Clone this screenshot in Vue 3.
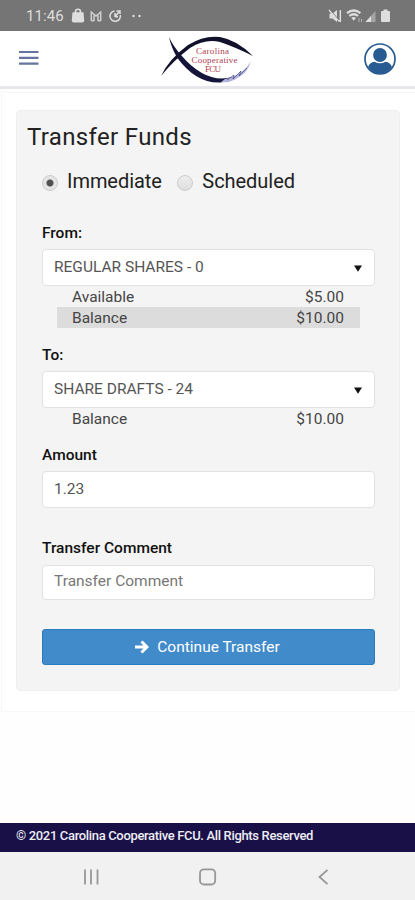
<script setup>
import { ref } from 'vue'

const timing = ref('Immediate')
const timings = ['Immediate', 'Scheduled']
const amount = ref('1.23')
const comment = ref('')
const accounts = [
  {
    label: 'From:',
    name: 'REGULAR SHARES - 0',
    rows: [
      { label: 'Available', value: '$5.00' },
      { label: 'Balance', value: '$10.00', shaded: true },
    ],
  },
  {
    label: 'To:',
    name: 'SHARE DRAFTS - 24',
    rows: [{ label: 'Balance', value: '$10.00' }],
  },
]
</script>

<template>
  <div class="screen">
    <div class="status">
      <span class="time">11:46</span>
      <svg class="status-left" width="75" height="16" viewBox="0 0 75 16" fill="#dedede">
        <path d="M1.500 4.200h11l.7 8q.1 2.200-2 2.200H2.800q-2.100 0-2-2.200z" />
        <path d="M4.500 5V3.800a2.500 2.500 0 0 1 5 0V5" fill="none" stroke="#dedede" stroke-width="1.600" />
        <path d="M20.300 12.800V4l4.700 4 4.700-4v8.800M23 13V7.500M27 13V7.500M20.300 12.800H23M27 12.800h2.700" fill="none" stroke="#d0d0d0" stroke-width="1.500" />
        <path d="M43.500 2.900A5.200 5.200 0 1 0 49.300 7M44 8.700l4-4.800M44 9V5M44 8.700H47M45.500 3H49V6" fill="none" stroke="#dedede" stroke-width="1.500" />
        <circle cx="62.500" cy="8" r="1.200" />
        <circle cx="68.500" cy="8" r="1.200" />
      </svg>
      <svg class="status-right" width="64" height="16" viewBox="0 0 64 16" fill="#dedede">
        <path d="M1.500 5.500h3L9 2v12L4.500 10.500h-3z" />
        <path d="M1 2l10.500 11.500M12.300 2v12" fill="none" stroke="#dedede" stroke-width="1.500" />
        <path d="M2 1.500l9 10.500" stroke="#757575" stroke-width=".8" />
        <path d="M19 5.200q6.700-5.400 13.400 0M21.300 8q4.400-3.500 8.800 0" fill="none" stroke="#dedede" stroke-width="2.200" />
        <path d="M23.300 9.800q2.400-1.800 4.800 0l-2.400 3z" />
        <path d="M31 10v4M33.500 11v3" stroke="#b5b5b5" stroke-width="1" />
        <path d="M37.500 14l10-11v11z" fill="#a5a5a5" />
        <path d="M37.500 14l5.500-6v6z" />
        <path d="M54 3h1.500V1.500h4V3H61q1 0 1 1v9q0 1-1 1h-7q-1 0-1-1V4q0-1 1-1z" />
      </svg>
    </div>

    <header class="header">
      <svg class="menu" width="20" height="16" viewBox="0 0 20 16">
        <path d="M0 2h19.500M0 7.800h19.500M0 13.600h19.500" stroke="#6575a0" stroke-width="2.200" />
      </svg>
      <svg class="logo" width="96" height="52" viewBox="0 0 96 52">
        <path d="M8 3q4 9 12 18 20 23.500 41 23.500 10-.5 18-4-9 7.500-20 8-24 1-43-25Q10 13 8 3z" fill="#15153b" />
        <path d="M0 42Q8 25 27 11 43 1 59 3q17 3 33 19Q74 13 59 8 44 4.500 29 14 13 26 0 42z" fill="#11112c" />
        <path d="M64 45q17-3 26-18-3 12-16 18.500Q68 49 60 48z" fill="#b4b3dc" />
        <path d="M66 46l7-5-1 4 8-8-2 5 8-8" fill="none" stroke="#51508d" stroke-width=".8" />
        <g class="logo-text" fill="#af4051" text-anchor="middle">
          <text x="51.500" y="19.500" textLength="33">Carolina</text>
          <text x="53.500" y="28.800" textLength="46">Cooperative</text>
          <text x="52" y="38" textLength="16">FCU</text>
        </g>
      </svg>
      <svg class="user" width="32" height="32" viewBox="0 0 32 32">
        <circle cx="16" cy="16" r="15" fill="#fff" stroke="#285b92" stroke-width="1.700" />
        <circle cx="16" cy="12" r="6.900" fill="#285b92" />
        <path d="M4 24q2-5 6.500-5.300 5.500 3 11 0 4.500.3 6.500 5.300-4.500 7-12 7T4 24z" fill="#285b92" />
      </svg>
    </header>

    <main class="page">
      <section class="card">
        <h1>Transfer Funds</h1>
        <div class="timings">
          <label v-for="item in timings" :key="item" class="timing" @click="timing = item">
            <i class="radio" :class="{ checked: timing === item }"></i>
            <span>{{ item }}</span>
          </label>
        </div>

        <div v-for="account in accounts" :key="account.label" class="account">
          <div class="label">{{ account.label }}</div>
          <div class="control select">
            <span>{{ account.name }}</span>
            <svg width="8" height="7" viewBox="0 0 8 7"><path d="M0 .5h8L4 6.800z" fill="#111" /></svg>
          </div>
          <div v-for="row in account.rows" :key="row.label" class="row" :class="{ shaded: row.shaded }">
            <span>{{ row.label }}</span><span>{{ row.value }}</span>
          </div>
        </div>

        <div class="label">Amount</div>
        <input v-model="amount" class="control amount" />
        <div class="label comment-label">Transfer Comment</div>
        <input v-model="comment" class="control comment" placeholder="Transfer Comment" />

        <button class="submit">
          <svg width="14" height="14" viewBox="0 0 14 14"><path d="M0 7h11.500M6.500 1.500L12 7l-5.500 5.500" fill="none" stroke="#fff" stroke-width="2.900" /></svg>
          <span>Continue Transfer</span>
        </button>
      </section>
    </main>

    <footer class="footer">© 2021 Carolina Cooperative FCU. All Rights Reserved</footer>
    <nav class="nav">
      <svg width="18" height="18" viewBox="0 0 18 18"><path d="M3 1.500v15M9 1.500v15M15.500 1.500v15" stroke="#979797" stroke-width="1.800" /></svg>
      <svg width="18" height="18" viewBox="0 0 18 18"><rect x="1" y="1.300" width="15.200" height="15.200" rx="4" fill="none" stroke="#979797" stroke-width="1.800" /></svg>
      <svg width="18" height="18" viewBox="0 0 18 18"><path d="M12.500 1.800L4.500 9l8 7.200" fill="none" stroke="#979797" stroke-width="1.800" /></svg>
    </nav>
  </div>
</template>

<style>
body {
  margin: 0;
  background: #fff;
}
</style>

<style scoped>
* {
  box-sizing: border-box;
}
.screen {
  display: flex;
  flex-direction: column;
  width: 415px;
  height: 900px;
  overflow: hidden;
  background: #fefefe;
  color: #222;
  font-family: Roboto, "Liberation Sans", sans-serif;
}
.status {
  display: flex;
  align-items: center;
  height: 31px;
  padding: 1px 23px 0 26px;
  background: #757575;
}
.time {
  width: 45px;
  color: #dedede;
  font-size: 15px;
  letter-spacing: 0.1px;
}
.status-right {
  margin-left: auto;
}
.header {
  display: flex;
  align-items: center;
  height: 58px;
  padding: 0 19px;
  border-bottom: 3px solid #e6e7eb;
  background: #fff;
}
.menu {
  margin: 0 122px 1px 0;
}
.logo {
  margin-top: 2px;
}
.logo-text {
  font: 9px "Liberation Serif", serif;
}
.user {
  margin: 0 0 0 auto;
}
.page {
  height: 620px;
  margin: 3px 0 0 1px;
  padding: 17px 15px 0 14px;
  border: 1px solid #f7f7f7;
  border-right: 0;
  background: #fff;
}
.card {
  height: 581px;
  padding: 10px 24px 0 25px;
  border: 1px solid #efefef;
  border-radius: 4px;
  background: #f4f4f4;
}
h1 {
  margin: 0 0 0 -15px;
  color: #222;
  font-size: 24px;
  font-weight: 400;
  line-height: 32px;
  letter-spacing: 0.35px;
}
.timings {
  display: flex;
  gap: 15.500px;
  height: 69px;
  padding-top: 12px;
}
.timing {
  display: flex;
  gap: 9px;
  height: 32px;
  line-height: 32px;
  font-size: 20px;
  letter-spacing: -0.05px;
}
.radio {
  width: 16px;
  height: 16px;
  margin-top: 10px;
  border: 1px solid #cbcbcb;
  border-radius: 50%;
  background: linear-gradient(#ededed, #dedede);
}
.radio.checked {
  background: radial-gradient(circle, #505050 0 3px, #e5e5e5 4px);
}
.account {
  margin-bottom: 16px;
}
.label {
  height: 26px;
  padding-top: 1px;
  color: #111;
  font-size: 15.500px;
  font-weight: 500;
  line-height: 18px;
}
.account .label {
  height: 27px;
  padding-top: 2px;
}
.comment-label {
  height: 27px;
}
.control {
  display: block;
  width: 333px;
  height: 37px;
  padding: 0 12px 1px 11px;
  border: 1px solid #e2e2e2;
  border-radius: 4px;
  outline: 0;
  background: #fff;
  color: #555;
  font: 15.500px Roboto, "Liberation Sans", sans-serif;
}
.select {
  display: flex;
  align-items: center;
  justify-content: space-between;
}
.select svg {
  margin-top: 3px;
}
.row {
  display: flex;
  justify-content: space-between;
  width: 303px;
  height: 21px;
  margin-left: 15px;
  padding: 0 16px 0 15px;
  color: #444;
  font-size: 15.500px;
  line-height: 22px;
}
.shaded {
  background: #dcdcdc;
}
.amount {
  margin-bottom: 30px;
}
.comment {
  height: 35px;
  padding-bottom: 3px;
}
.comment::placeholder {
  color: #777;
  opacity: 1;
}
.submit {
  display: flex;
  align-items: center;
  justify-content: center;
  gap: 8px;
  width: 333px;
  height: 36px;
  margin-top: 29px;
  padding: 0 2px 0 0;
  border: 1px solid #2a7dbd;
  border-radius: 3px;
  background: #428bca;
  color: #fff;
  font: 15.500px Roboto, "Liberation Sans", sans-serif;
}
.footer {
  height: 29px;
  margin-top: auto;
  padding-left: 16px;
  background: #191047;
  color: #ededf4;
  font-size: 13px;
  font-weight: 500;
  line-height: 26px;
  letter-spacing: -0.34px;
}
.nav {
  display: flex;
  align-items: center;
  justify-content: space-between;
  height: 48px;
  padding: 2px 82px 0;
  background: #f1f1f1;
}
</style>
